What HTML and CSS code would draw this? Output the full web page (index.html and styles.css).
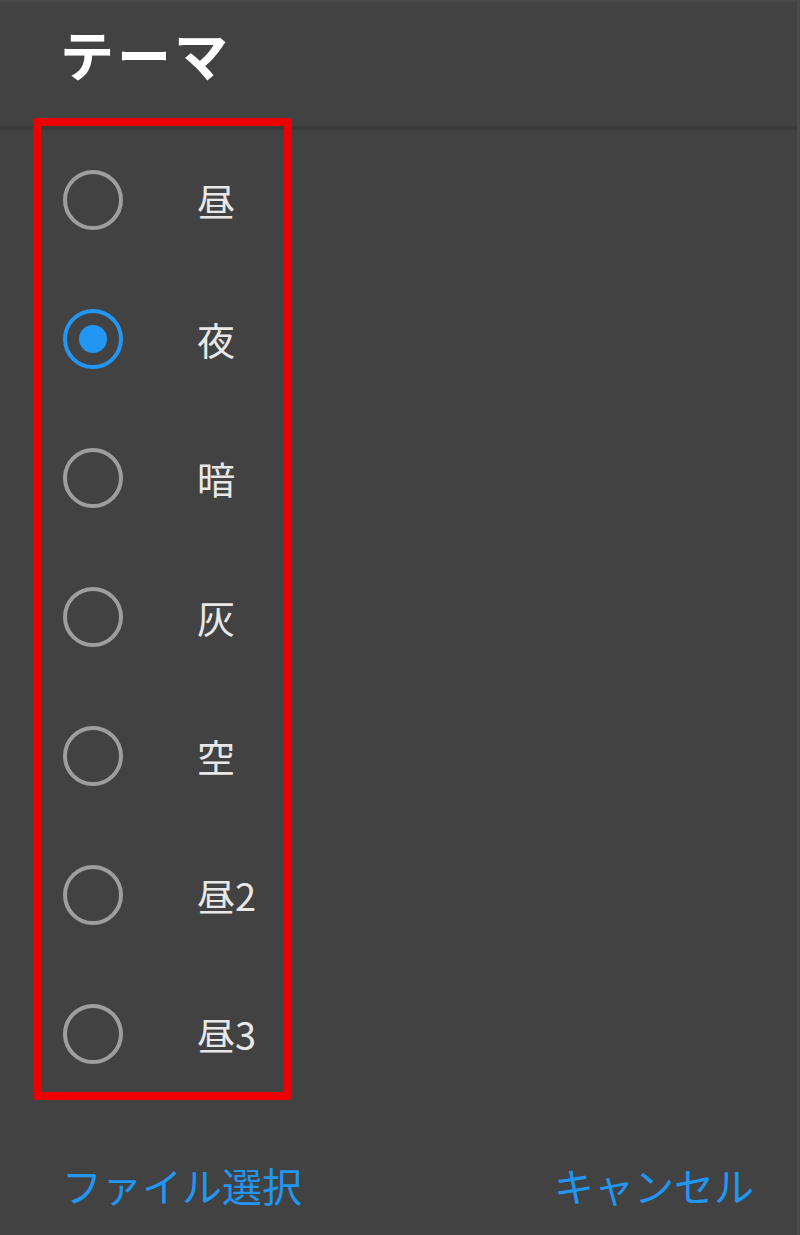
FILE: index.html
```html
<!DOCTYPE html>
<html lang="ja">
<head>
<meta charset="utf-8">
<link rel="stylesheet" href="styles.css">
</head>
<body>
<div class="dialog">
  <div class="header"><h1 class="title">テーマ</h1></div>
  <div class="body">
    <div class="mark">
      <div class="row"><span class="radio"></span><span class="label">昼</span></div>
      <div class="row"><span class="radio checked"></span><span class="label">夜</span></div>
      <div class="row"><span class="radio"></span><span class="label">暗</span></div>
      <div class="row"><span class="radio"></span><span class="label">灰</span></div>
      <div class="row"><span class="radio"></span><span class="label">空</span></div>
      <div class="row"><span class="radio"></span><span class="label">昼2</span></div>
      <div class="row"><span class="radio"></span><span class="label">昼3</span></div>
    </div>
  </div>
  <div class="footer">
    <span class="btn">ファイル選択</span>
    <span class="btn">キャンセル</span>
  </div>
</div>
</body>
</html>
```

FILE: styles.css
```css
html, body {
  margin: 0;
  padding: 0;
  background: #424242;
}
.dialog {
  width: 800px;
  height: 1235px;
  background: #424242;
  font-family: "Noto Sans CJK JP", "Noto Sans", sans-serif;
  display: flex;
  flex-direction: column;
  box-sizing: border-box;
  border-top: 2px solid #4a4a4a;
  border-right: 3px solid #4a4a4a;
}
.header {
  height: 128px;
  box-sizing: border-box;
  border-bottom: 4px solid #393939;
  padding-left: 60px;
  display: flex;
  align-items: flex-start;
}
.title {
  margin: 0;
  margin-top: 16px;
  font-size: 54px;
  line-height: 72px;
  font-weight: 700;
  color: #ffffff;
  letter-spacing: 3px;
}
.body {
  flex: 1;
}
.mark {
  margin-left: 33px;
  margin-top: -12px;
  width: 259px;
  box-sizing: border-box;
  border: 8px solid #ee0000;
  border-radius: 4px;
  padding: 16px 0 0 22px;
  display: flex;
  flex-direction: column;
  gap: 23px;
  height: 982px;
}
.row {
  height: 116px;
  display: flex;
  align-items: center;
}
.radio {
  width: 60px;
  height: 60px;
  box-sizing: border-box;
  border: 4px solid #9e9e9e;
  border-radius: 50%;
  flex: none;
  display: flex;
  align-items: center;
  justify-content: center;
}
.radio.checked {
  border-color: #2196f3;
}
.radio.checked::after {
  content: "";
  width: 28px;
  height: 28px;
  border-radius: 50%;
  background: #2196f3;
}
.label {
  margin-left: 74px;
  font-size: 38px;
  color: #e8e8e8;
  line-height: 1;
}
.footer {
  height: 108px;
  display: flex;
  justify-content: space-between;
  align-items: flex-start;
  padding: 0 43px 0 62px;
}
.btn {
  font-size: 40px;
  line-height: 60px;
  color: #2196f3;
  margin-top: 28px;
}
```
